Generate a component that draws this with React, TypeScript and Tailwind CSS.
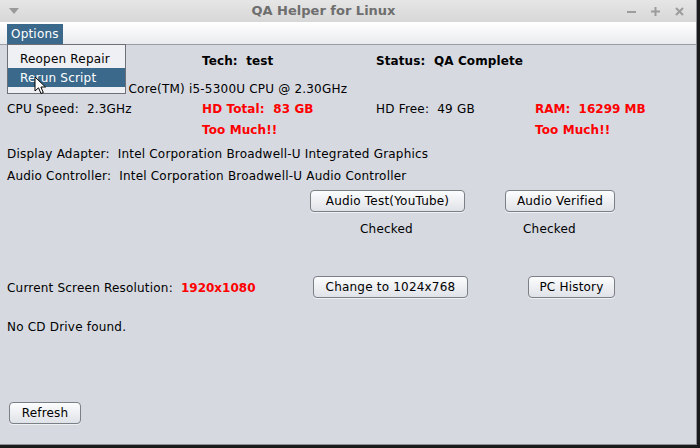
import React from "react";

const font = { fontFamily: '"DejaVu Sans", Verdana, sans-serif' };

const Button = ({ label, className = "" }: { label: string; className?: string }) => (
  <button
    className={`h-[22px] rounded-[4px] border border-[#7b7f86] bg-gradient-to-b from-[#fdfdfe] to-[#dfe2e7] text-[12px] text-black leading-none tracking-[0.2px] shadow-[0_1px_0_#eef0f3] ${className}`}
  >
    {label}
  </button>
);

const Row = ({ className = "", children }: { className?: string; children?: React.ReactNode }) => (
  <div className={`grid h-[18px] grid-cols-[195px_174px_159px_1fr] items-center pt-[2px] whitespace-pre ${className}`}>
    {children}
  </div>
);

const Cursor = () => (
  <svg width="14" height="20" viewBox="0 0 14 20" className="absolute left-[34px] top-[76px]">
    <path d="M1 1 L1 15 L4.5 11.8 L7 17.5 L9.3 16.5 L6.9 11 L11.5 11 Z" fill="#fff" stroke="#000" strokeWidth="1" strokeLinejoin="round" />
  </svg>
);

export default function App() {
  return (
    <div className="relative h-[448px] w-[700px] overflow-hidden bg-[#1b1b1b] text-[12px] text-black" style={font}>
      <div className="flex h-[445px] w-[697px] flex-col border-r border-b border-[#8d9096] bg-[#d6d9e0]">
        {/* title bar */}
        <div className="relative flex h-[22px] items-center bg-gradient-to-b from-[#e6e6e6] to-[#d7d7d7]">
          <svg width="10" height="6" viewBox="0 0 10 6" className="ml-[9px]">
            <path d="M0 0 H10 L5 6 Z" fill="#9a9a9a" />
          </svg>
          <div className="flex-1 pl-[1px] text-center text-[13px] font-bold text-[#6e6e6e]">QA Helper for Linux</div>
          <div className="mr-[12px] flex items-center gap-[15px]">
            <svg width="9" height="9" viewBox="0 0 9 9">
              <rect x="0" y="4" width="9" height="2" fill="#9c9c9c" />
            </svg>
            <svg width="9" height="9" viewBox="0 0 9 9">
              <rect x="0" y="3.5" width="9" height="2" fill="#9c9c9c" />
              <rect x="3.5" y="0" width="2" height="9" fill="#9c9c9c" />
            </svg>
            <svg width="9" height="9" viewBox="0 0 9 9">
              <path d="M1 1 L8 8 M8 1 L1 8" stroke="#9c9c9c" strokeWidth="2" />
            </svg>
          </div>
        </div>

        {/* menu bar */}
        <div className="flex h-[23px] items-end border-b border-[#9a9da4] bg-gradient-to-b from-[#ffffff] to-[#e9ebee] pl-[7px]">
          <div className="flex h-[20px] items-center bg-[#3a698c] px-[4px] text-[12px] tracking-[0.2px] text-white">Options</div>
        </div>

        {/* content */}
        <div className="flex flex-col pl-[7px] tracking-[0.2px]">
          <Row className="mt-[5px] font-bold tracking-[0.1px]">
            <span />
            <span>Tech:  test</span>
            <span>Status:  QA Complete</span>
          </Row>
          <div className="mt-[11px] flex h-[18px] items-center pt-[2px] whitespace-pre">
            Processor:  Intel(R) Core(TM) i5-5300U CPU @ 2.30GHz
          </div>
          <Row className="mt-[1px]">
            <span>CPU Speed:  2.3GHz</span>
            <span className="font-bold tracking-[0.1px] text-[#ff0000]">HD Total:  83 GB</span>
            <span>HD Free:  49 GB</span>
            <span className="font-bold tracking-[0px] text-[#ff0000]">RAM:  16299 MB</span>
          </Row>
          <Row className="mt-[3px] font-bold tracking-[0.1px] text-[#ff0000]">
            <span />
            <span>Too Much!!</span>
            <span />
            <span>Too Much!!</span>
          </Row>
          <div className="mt-[7px] flex h-[18px] items-center pt-[2px] whitespace-pre">
            Display Adapter:  Intel Corporation Broadwell-U Integrated Graphics
          </div>
          <div className="mt-[4px] flex h-[18px] items-center pt-[2px] whitespace-pre">
            Audio Controller:  Intel Corporation Broadwell-U Audio Controller
          </div>

          <div className="mt-[6px] flex h-[22px] items-center">
            <Button label="Audio Test(YouTube)" className="ml-[303px] w-[155px]" />
            <Button label="Audio Verified" className="ml-[40px] w-[110px]" />
          </div>
          <div className="mt-[7px] flex h-[18px] items-center pt-[2px]">
            <span className="ml-[353px] w-[163px]">Checked</span>
            <span>Checked</span>
          </div>

          <div className="mt-[39px] flex h-[22px] items-center whitespace-pre">
            <span className="w-[306px] pt-[2px]">
              Current Screen Resolution:  <span className="font-bold tracking-[0px] text-[#ff0000]">1920x1080</span>
            </span>
            <Button label="Change to 1024x768" className="w-[155px]" />
            <Button label="PC History" className="ml-[60px] w-[87px]" />
          </div>

          <div className="mt-[19px] flex h-[18px] items-center pt-[2px]">No CD Drive found.</div>

          <div className="mt-[67px] flex h-[22px] items-center">
            <Button label="Refresh" className="ml-[2px] w-[72px]" />
          </div>
        </div>
      </div>

      {/* open Options menu */}
      <div className="absolute left-[7px] top-[44px] flex w-[119px] flex-col border border-[#6d7076] bg-[#eef0f4] pt-[4px] pb-[6px] tracking-[0.2px]">
        <div className="flex h-[19px] items-center pl-[12px]">Reopen Repair</div>
        <div className="flex h-[19px] items-center bg-[#3a698c] pl-[12px] text-white">Rerun Script</div>
      </div>
      <Cursor />
    </div>
  );
}
